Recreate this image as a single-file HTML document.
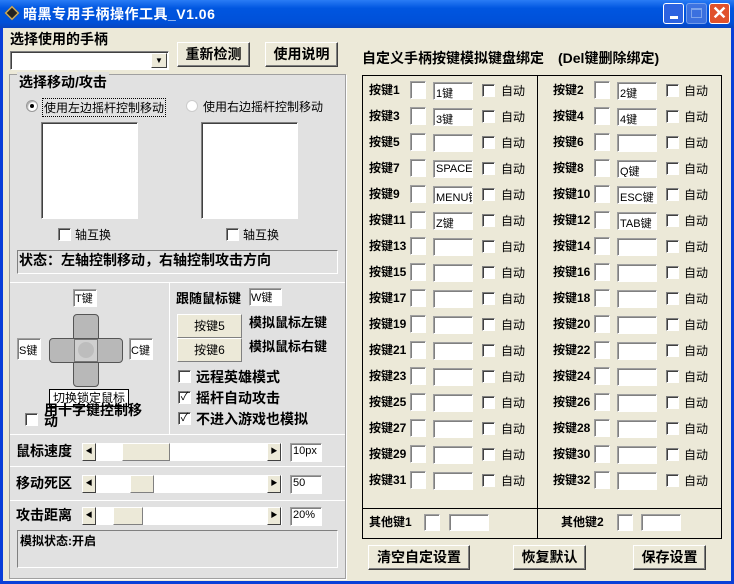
<!DOCTYPE html>
<html><head><meta charset="utf-8"><style>
*{box-sizing:border-box;margin:0;padding:0}
body{width:734px;height:584px;position:relative;overflow:hidden;background:#0a3fd8;font-family:"Liberation Sans","Noto Sans CJK SC","WenQuanYi Zen Hei",sans-serif;font-size:12px;color:#000}
.a{position:absolute}
#title{left:0;top:0;width:734px;height:28px;background:linear-gradient(#2a7cf5,#0056e0 30%,#0050d8 80%,#0845c0);}
#client{left:3px;top:28px;width:728px;height:553px;background:#ece9d8}
.b{font-weight:bold}
.sunk{background:#fff;border:1px solid;border-color:#808080 #fff #fff #808080;box-shadow:inset 1px 1px 0 #404040}
.btn{background:#ece9d8;border:1px solid;border-color:#fff #404040 #404040 #fff;box-shadow:inset -1px -1px 0 #808080;text-align:center;font-weight:bold;font-size:14px}
.cb{width:13px;height:13px;background:#fff;border:1px solid;border-color:#808080 #fff #fff #808080;box-shadow:inset 1px 1px 0 #404040;font-size:11px;line-height:10px;text-align:center}
.fld{background:#fff;border:1px solid;border-color:#a0a0a0 #fff #fff #a0a0a0;box-shadow:inset 1px 1px 0 #808080;font-size:11px;padding:2px 0 0 2px;overflow:hidden;white-space:nowrap}
.hl{height:1px;background:#a0a0a0;border-bottom:1px solid #fff}
.lbl{font-weight:bold;font-size:12px}
.sb{background:#fff;height:18px}
.arr{width:14px;height:18px;background:#ece9d8;border:1px solid;border-color:#fff #404040 #404040 #fff;font-size:7px;line-height:16px;text-align:center}
.th{height:18px;background:#ece9d8;border:1px solid;border-color:#fff #808080 #808080 #fff}
</style></head><body>
<div class="a" id="title"></div>
<div class="a" style="left:5px;top:6px;width:14px;height:14px;background:#222;transform:rotate(45deg) scale(.75);border:2px solid #c9a85a"></div>
<div class="a b" style="left:23px;top:4px;color:#fff;font-size:14px;letter-spacing:0.5px">暗黑专用手柄操作工具_V1.06</div>
<div class="a" style="left:663px;top:3px;width:21px;height:21px;border:1px solid #fff;border-radius:3px;background:#2d63e0"><div class="a" style="left:6px;top:12px;width:8px;height:3px;background:#fff"></div></div>
<div class="a" style="left:686px;top:3px;width:21px;height:21px;border:1px solid #8fb0f0;border-radius:3px;background:#4a78e0;opacity:.8"><div class="a" style="left:4px;top:4px;width:11px;height:10px;border:1px solid #9cb8f0;border-top-width:2px"></div></div>
<div class="a" style="left:709px;top:3px;width:21px;height:21px;border:1px solid #fff;border-radius:3px;background:#e0522c;color:#fff;font-size:18px;line-height:19px;text-align:center;font-weight:bold">✕</div>
<div class="a" id="client"></div>

<div class="a b" style="left:10px;top:29px;font-size:14px">选择使用的手柄</div>
<div class="a sunk" style="left:10px;top:51px;width:159px;height:19px"></div>
<div class="a" style="left:151px;top:53px;width:16px;height:15px;background:#ece9d8;border:1px solid;border-color:#fff #404040 #404040 #fff;font-size:8px;text-align:center;line-height:13px">▼</div>
<div class="a btn" style="left:177px;top:42px;width:73px;height:25px;line-height:22px">重新检测</div>
<div class="a btn" style="left:265px;top:42px;width:73px;height:25px;line-height:22px">使用说明</div>

<div class="a" style="left:9px;top:74px;width:337px;height:505px;background:#e1e1e1;border:1px solid #a0a0a0;box-shadow:1px 1px 0 #fff"></div>
<div class="a b" style="left:17px;top:72px;font-size:14px;background:#e1e1e1;padding:0 2px">选择移动/攻击</div>
<div class="a" style="left:26px;top:100px;width:12px;height:12px;border-radius:50%;background:#fff;border:1px solid #999;box-shadow:inset 1px 1px 1px #aaa"><div class="a" style="left:3px;top:3px;width:4px;height:4px;border-radius:50%;background:#000"></div></div>
<div class="a" style="left:42px;top:98px;border:1px dotted #000;padding:0 1px">使用左边摇杆控制移动</div>
<div class="a" style="left:186px;top:100px;width:12px;height:12px;border-radius:50%;background:#fff;border:1px solid #ccc"></div>
<div class="a" style="left:203px;top:98px">使用右边摇杆控制移动</div>
<div class="a sunk" style="left:41px;top:122px;width:97px;height:97px"></div>
<div class="a sunk" style="left:201px;top:122px;width:97px;height:97px"></div>
<div class="a cb" style="left:58px;top:228px"></div><div class="a" style="left:75px;top:226px">轴互换</div>
<div class="a cb" style="left:226px;top:228px"></div><div class="a" style="left:243px;top:226px">轴互换</div>
<div class="a" style="left:17px;top:250px;width:321px;height:24px;border:1px solid;border-color:#808080 #fff #fff #808080;font-weight:bold;font-size:14px;padding:1px 0 0 1px;line-height:16px">状态：左轴控制移动，右轴控制攻击方向</div>
<div class="a hl" style="left:10px;top:282px;width:335px"></div>
<div class="a" style="left:169px;top:283px;width:1px;height:151px;background:#a0a0a0;border-right:1px solid #fff"></div>

<div class="a fld" style="left:73px;top:289px;width:24px;height:18px;padding:0 0 0 1px">T键</div>
<div class="a fld" style="left:17px;top:338px;width:24px;height:22px;padding:3px 0 0 1px">S键</div>
<div class="a fld" style="left:129px;top:338px;width:24px;height:22px;padding:3px 0 0 1px">C键</div>
<div class="a" style="left:73px;top:314px;width:26px;height:73px;background:#b8b8b8;border:1px solid #555;border-radius:4px"></div>
<div class="a" style="left:49px;top:338px;width:74px;height:25px;background:#b8b8b8;border:1px solid #555;border-radius:4px"></div>
<div class="a" style="left:74px;top:339px;width:24px;height:23px;background:#cfcfcf;border:1px solid #777"></div>
<div class="a" style="left:78px;top:342px;width:16px;height:16px;border-radius:50%;background:#bdbdbd"></div>
<div class="a" style="left:49px;top:389px;width:80px;height:18px;background:#fff;border:1px solid #000;text-align:center;line-height:16px">切换锁定鼠标</div>
<div class="a cb" style="left:25px;top:413px"></div>
<div class="a b" style="left:44px;top:405px;font-size:14px;line-height:11px;width:110px">用十字键控制移<br>动</div>

<div class="a lbl" style="left:176px;top:288px;font-size:13px">跟随鼠标键</div>
<div class="a fld" style="left:249px;top:288px;width:33px;height:18px;padding:0 0 0 1px">W键</div>
<div class="a" style="left:177px;top:314px;width:65px;height:24px;background:#ece9d8;border:1px solid;border-color:#fff #808080 #808080 #fff;text-align:center;line-height:22px">按键5</div>
<div class="a" style="left:177px;top:338px;width:65px;height:24px;background:#ece9d8;border:1px solid;border-color:#fff #808080 #808080 #fff;text-align:center;line-height:22px">按键6</div>
<div class="a b" style="left:249px;top:312px;font-size:13px">模拟鼠标左键</div>
<div class="a b" style="left:249px;top:336px;font-size:13px">模拟鼠标右键</div>
<div class="a cb" style="left:178px;top:370px"></div><div class="a b" style="left:196px;top:367px;font-size:14px">远程英雄模式</div>
<div class="a cb" style="left:178px;top:391px">✓</div><div class="a b" style="left:196px;top:388px;font-size:14px">摇杆自动攻击</div>
<div class="a cb" style="left:178px;top:412px">✓</div><div class="a b" style="left:196px;top:409px;font-size:14px">不进入游戏也模拟</div>

<div class="a hl" style="left:10px;top:434px;width:335px"></div>
<div class="a hl" style="left:10px;top:466px;width:335px"></div>
<div class="a hl" style="left:10px;top:500px;width:335px"></div>

<div class="a b" style="left:16px;top:441px;font-size:14px">鼠标速度</div>
<div class="a sb" style="left:82px;top:443px;width:200px"></div>
<div class="a arr" style="left:82px;top:443px">◀</div><div class="a arr" style="left:267px;top:443px">▶</div>
<div class="a th" style="left:122px;top:443px;width:48px"></div>
<div class="a fld" style="left:290px;top:443px;width:32px;height:19px;padding:1px 0 0 2px">10px</div>

<div class="a b" style="left:16px;top:473px;font-size:14px">移动死区</div>
<div class="a sb" style="left:82px;top:475px;width:200px"></div>
<div class="a arr" style="left:82px;top:475px">◀</div><div class="a arr" style="left:267px;top:475px">▶</div>
<div class="a th" style="left:130px;top:475px;width:24px"></div>
<div class="a fld" style="left:290px;top:475px;width:32px;height:19px;padding:1px 0 0 2px">50</div>

<div class="a b" style="left:16px;top:505px;font-size:14px">攻击距离</div>
<div class="a sb" style="left:82px;top:507px;width:200px"></div>
<div class="a arr" style="left:82px;top:507px">◀</div><div class="a arr" style="left:267px;top:507px">▶</div>
<div class="a th" style="left:113px;top:507px;width:30px"></div>
<div class="a fld" style="left:290px;top:507px;width:32px;height:19px;padding:1px 0 0 2px">20%</div>
<div class="a" style="left:17px;top:530px;width:321px;height:38px;border:1px solid;border-color:#808080 #fff #fff #808080;font-weight:bold;padding:1px 0 0 2px">模拟状态:开启</div>

<div class="a b" style="left:362px;top:48px;font-size:14px">自定义手柄按键模拟键盘绑定　(Del键删除绑定)</div>
<div class="a" style="left:362px;top:75px;width:360px;height:464px;border:1px solid #000"></div>
<div class="a" style="left:537px;top:75px;width:1px;height:464px;background:#000"></div>
<div class="a" style="left:362px;top:508px;width:360px;height:1px;background:#000"></div>
<div id="rows"></div>
<div class="a lbl" style="left:369px;top:513px">其他键1</div>
<div class="a fld" style="left:424px;top:514px;width:16px;height:17px"></div>
<div class="a fld" style="left:449px;top:514px;width:40px;height:17px"></div>
<div class="a lbl" style="left:561px;top:513px">其他键2</div>
<div class="a fld" style="left:617px;top:514px;width:16px;height:17px"></div>
<div class="a fld" style="left:641px;top:514px;width:40px;height:17px"></div>
<div class="a btn" style="left:368px;top:545px;width:102px;height:25px;line-height:22px">清空自定设置</div>
<div class="a btn" style="left:513px;top:545px;width:73px;height:25px;line-height:22px">恢复默认</div>
<div class="a btn" style="left:633px;top:545px;width:73px;height:25px;line-height:22px">保存设置</div>
<script>
var v={1:'1键',2:'2键',3:'3键',4:'4键',7:'SPACE',8:'Q键',9:'MENU键',10:'ESC键',11:'Z键',12:'TAB键'};
var h='';
for(var i=0;i<16;i++){var y=81+i*26;
[[1+2*i,369,410,433,482,501],[2+2*i,553,594,617,666,684]].forEach(function(c){
h+='<div class="a lbl" style="left:'+c[1]+'px;top:'+(y)+'px">按键'+c[0]+'</div>';
h+='<div class="a fld" style="left:'+c[2]+'px;top:'+y+'px;width:16px;height:18px"></div>';
h+='<div class="a fld" style="left:'+c[3]+'px;top:'+(y+1)+'px;width:40px;height:18px">'+(v[c[0]]||'')+'</div>';
h+='<div class="a cb" style="left:'+c[4]+'px;top:'+(y+3)+'px"></div>';
h+='<div class="a" style="left:'+c[5]+'px;top:'+(y+1)+'px">自动</div>';});}
document.getElementById('rows').innerHTML=h;
</script>
</body></html>
